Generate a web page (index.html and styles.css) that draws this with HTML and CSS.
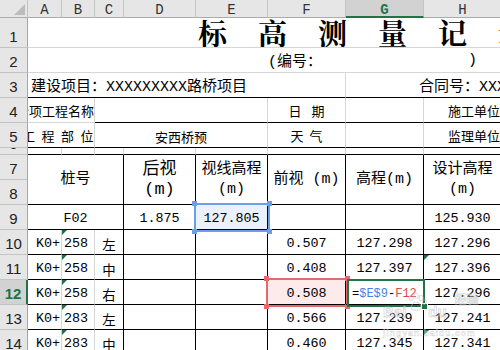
FILE: index.html
```html
<!DOCTYPE html>
<html>
<head>
<meta charset="utf-8">
<link rel="stylesheet" href="styles.css">
</head>
<body>
<div class="sheet">
  <div class="c hd corner"><i class="tri"></i></div>
  <div class="c hd">A</div><div class="c hd">B</div><div class="c hd">C</div><div class="c hd">D</div><div class="c hd">E</div><div class="c hd">F</div><div class="c hd sel">G</div><div class="c hd">H</div>

  <div class="c rh">1</div>
  <div class="c s8 title">标高测量记录</div>

  <div class="c rh">2</div>
  <div class="c s8 r2"><span>(编号：</span><span class="rp">)</span></div>

  <div class="c rh">3</div>
  <div class="c s6 bb r3">建设项目：XXXXXXXXX路桥项目</div>
  <div class="c s2 bb r3 ht">合同号：XXXXXXXXX</div>

  <div class="c rh">4</div>
  <div class="c s2 lab">分项工程名称</div>
  <div class="c s3 bb"></div>
  <div class="c bb lab2 ls10">日期</div>
  <div class="c bb"></div>
  <div class="c bb lab3">施工单位</div>

  <div class="c rh">5</div>
  <div class="c s2 bb lab"><span class="ls6">工程部位</span></div>
  <div class="c s3 bb mid">安西桥预</div>
  <div class="c bb lab2 ls6b">天气</div>
  <div class="c bb"></div>
  <div class="c bb lab3">监理单位</div>

  <div class="c rh">6</div>
  <div class="c bb"></div><div class="c bb"></div><div class="c bb"></div><div class="c bb"></div><div class="c bb"></div><div class="c bb"></div><div class="c bb"></div><div class="c bb"></div>

  <div class="c rh">7</div>
  <div class="c s3 rs2 bb br th">桩号</div>
  <div class="c rs2 bb br th big"><span>后视<br>(m)</span></div>
  <div class="c rs2 bb br th"><span>视线高程<br>(m)</span></div>
  <div class="c rs2 bb br th">前视 (m)</div>
  <div class="c rs2 bb br th">高程(m)</div>
  <div class="c rs2 bb br th"><span>设计高程<br>(m)</span></div>
  <div class="c rh">8</div>

  <div class="c rh">9</div>
  <div class="c s3 bb br d">F02</div>
  <div class="c bb br d">1.875</div>
  <div class="c bb br d selE">127.805<i class="box blue"><i class="hn tl"></i><i class="hn tr"></i><i class="hn bl"></i><i class="hn br2"></i></i></div>
  <div class="c bb br d"></div>
  <div class="c bb br d"></div>
  <div class="c bb br d">125.930</div>

  <div class="c rh">10</div>
  <div class="c bb d ka">K0+</div>
  <div class="c bb d kb tg">258</div>
  <div class="c bb br d">左</div>
  <div class="c bb br d"></div>
  <div class="c bb br d"></div>
  <div class="c bb br d">0.507</div>
  <div class="c bb br d">127.298</div>
  <div class="c bb br d">127.296</div>

  <div class="c rh">11</div>
  <div class="c bb d ka">K0+</div>
  <div class="c bb d kb tg">258</div>
  <div class="c bb br d">中</div>
  <div class="c bb br d"></div>
  <div class="c bb br d"></div>
  <div class="c bb br d">0.408</div>
  <div class="c bb br d">127.397</div>
  <div class="c bb br d tg">127.396</div>

  <div class="c rh sel">12</div>
  <div class="c bb d ka">K0+</div>
  <div class="c bb d kb tg">258</div>
  <div class="c bb br d">右</div>
  <div class="c bb br d"></div>
  <div class="c bb br d"></div>
  <div class="c bb br d selF">0.508<i class="box red"><i class="hn tl"></i><i class="hn tr"></i><i class="hn bl"></i><i class="hn br2"></i></i></div>
  <div class="c bb br d selG"><span class="fx">=<b class="fb">$E$9</b>-<b class="fr">F12</b></span><i class="box green"><i class="fill"></i></i></div>
  <div class="c bb br d">127.296</div>

  <div class="c rh">13</div>
  <div class="c bb d ka">K0+</div>
  <div class="c bb d kb tg">283</div>
  <div class="c bb br d">左</div>
  <div class="c bb br d"></div>
  <div class="c bb br d"></div>
  <div class="c bb br d">0.566</div>
  <div class="c bb br d">127.239</div>
  <div class="c bb br d">127.241</div>

  <div class="c rh">14</div>
  <div class="c bb d ka">K0+</div>
  <div class="c bb d kb tg">283</div>
  <div class="c bb br d">中</div>
  <div class="c bb br d"></div>
  <div class="c bb br d"></div>
  <div class="c bb br d">0.460</div>
  <div class="c bb br d">127.345</div>
  <div class="c bb br d tg">127.341</div>
</div>

<div class="wm">
  <div class="wm-top"><span class="wm-bai">Bai</span><svg class="paw" width="22" height="18" viewBox="0 0 26 22"><g fill="none" stroke="#bdbdbd" stroke-width="1.2" opacity="0.6"><ellipse cx="6" cy="6" rx="2.6" ry="3.4"/><ellipse cx="12" cy="3.5" rx="2.6" ry="3.2"/><ellipse cx="18" cy="6" rx="2.6" ry="3.4"/><ellipse cx="22" cy="11" rx="2.2" ry="2.8"/><path d="M6 18c0-4 3-7 6-7s6 3 6 7c0 2-2 3-6 3s-6-1-6-3z"/></g></svg><span class="wm-du">du</span><span class="wm-jy">经验</span></div>
  <div class="wm-url">jingyan.baidu.com</div>
</div>
</body>
</html>
```

FILE: styles.css
```css
html, body {
  margin: 0;
  padding: 0;
  background: #fff;
  width: 500px;
  height: 350px;
  overflow: hidden;
}

.sheet {
  display: grid;
  grid-template-columns: 28px 34px 33px 29px 72px 72px 78px 78px 78px;
  grid-template-rows: 18px 30px 25px 25px 25px 25px 7px 25px 25px 25px 25px 25px 25px 25px 25px;
  font-family: "Liberation Mono", "Noto Sans CJK SC", monospace;
  font-size: 14px;
  color: #000;
}

.c {
  box-sizing: border-box;
  border-right: 1px solid #d6d6d6;
  border-bottom: 1px solid #d6d6d6;
  display: flex;
  align-items: center;
  justify-content: center;
  overflow: hidden;
  white-space: nowrap;
  position: relative;
}

.s2 { grid-column: span 2; }
.s3 { grid-column: span 3; }
.s6 { grid-column: span 6; }
.s8 { grid-column: span 8; }
.rs2 { grid-row: span 2; }

.bb { border-bottom-color: #000; }
.br { border-right-color: #000; }

/* headers */
.hd {
  background: #e6e6e6;
  border-right-color: #c4c4c4;
  border-bottom-color: #ababab;
  font-family: "Liberation Mono", monospace;
  font-size: 14px;
  color: #333;
  padding-top: 3px;
}
.hd.sel {
  background: #d2d2d2;
  color: #217346;
  font-weight: bold;
  border-bottom: 2px solid #217346;
}
.corner .tri {
  position: absolute;
  right: 2px;
  bottom: 2px;
  width: 0;
  height: 0;
  border-left: 11px solid transparent;
  border-bottom: 11px solid #bcbcbc;
}
.rh {
  background: #e6e6e6;
  border-right-color: #a6a6a6;
  border-bottom-color: #c4c4c4;
  align-items: flex-end;
  font-family: "Liberation Sans", sans-serif;
  font-size: 15px;
  line-height: 16px;
  color: #222;
  padding-bottom: 2px;
}
.rh.sel {
  background: #d2d2d2;
  color: #217346;
  font-weight: bold;
  border-right: 2px solid #217346;
}

/* title rows */
.title {
  justify-content: flex-start;
  padding-left: 170px;
  font-family: "Noto Serif CJK SC", "Noto Sans CJK SC", serif;
  font-weight: bold;
  font-size: 29px;
  letter-spacing: 31px;
  line-height: 30px;
}
.r2 {
  justify-content: flex-start;
  padding-left: 240px;
  font-size: 15px;
}
.rp { margin-left: auto; margin-right: 24px; }
.r3 {
  justify-content: flex-start;
  padding-left: 3px;
  font-size: 15px;
}
.ht { padding-left: 73px; }

/* label rows */
.lab {
  justify-content: flex-end;
  align-items: flex-end;
  font-size: 13px;
  line-height: 16px;
  padding-bottom: 1px;
}
.lab2 {
  align-items: flex-end;
  font-size: 13px;
  line-height: 16px;
  padding-bottom: 1px;
}
.lab3 {
  justify-content: flex-end;
  align-items: flex-end;
  font-size: 13px;
  line-height: 16px;
  padding-bottom: 1px;
  padding-right: 1px;
}
.ls10 { letter-spacing: 10px; padding-left: 10px; }
.ls6 { letter-spacing: 6.5px; margin-right: -6px; flex-shrink: 0; }
.ls6b { letter-spacing: 6px; padding-left: 6px; }
.mid {
  font-size: 13px;
  padding-top: 2px;
}

/* table header */
.th {
  font-size: 15px;
  line-height: 20px;
  text-align: center;
}
.th.big { font-size: 17px; }

/* data */
.d {
  font-size: 13.4px;
  padding-top: 3px;
}
.ka { justify-content: flex-end; padding-right: 1px; }
.kb { justify-content: flex-start; padding-left: 2px; }

.tg::before {
  content: "";
  position: absolute;
  top: 0;
  left: 0;
  width: 0;
  height: 0;
  border-top: 5px solid #1e7145;
  border-right: 5px solid transparent;
}

/* selections */
.selE { background: #eaf0fc; overflow: visible; z-index: 3; }
.selF { background: #fdeaea; overflow: visible; z-index: 3; }
.selG { overflow: visible; z-index: 4; justify-content: flex-start; padding-left: 6px; }
.fx { font-size: 12px; }

.box {
  position: absolute;
  display: block;
  box-sizing: border-box;
}
.box.blue {
  left: -2px; top: -2px; right: -3px; bottom: -3px;
  border: 2px solid #6d9ce9;
}
.box.red {
  left: -2px; top: -2px; right: -3px; bottom: -3px;
  border: 2px solid #e5696b;
}
.box.green {
  left: 1px; top: -1px; right: -2px; bottom: -3px;
  border: 2px solid #217346;
}
.hn {
  position: absolute;
  display: block;
  width: 5px;
  height: 5px;
}
.blue .hn { background: #6d9ce9; }
.red .hn { background: #e5696b; }
.hn.tl { left: -4px; top: -4px; }
.hn.tr { right: -4px; top: -4px; }
.hn.bl { left: -4px; bottom: -4px; }
.hn.br2 { right: -4px; bottom: -4px; }
.fill {
  position: absolute;
  display: block;
  right: -5px;
  bottom: -5px;
  width: 5px;
  height: 5px;
  background: #217346;
  border: 1px solid #fff;
}
.fx b { font-weight: normal; }
.fb { color: #4a7fe3; }
.fr { color: #e0484b; }

/* watermark */
.wm {
  position: absolute;
  left: 383px;
  top: 290px;
  width: 117px;
  pointer-events: none;
  font-family: "Liberation Sans", sans-serif;
  z-index: 10;
}
.wm-top {
  display: flex;
  align-items: flex-end;
  height: 30px;
}
.wm-bai, .wm-du {
  font-weight: bold;
  font-size: 15px;
  color: rgba(255,255,255,0.45);
  -webkit-text-stroke: 0.8px rgba(160,160,160,0.45);
  line-height: 16px;
}
.paw { margin-bottom: 9px; }
.wm-jy {
  font-family: "Noto Sans CJK SC", sans-serif;
  font-weight: bold;
  font-size: 12px;
  line-height: 14px;
  color: rgba(255,255,255,0.4);
  -webkit-text-stroke: 0.8px rgba(160,160,160,0.4);
  margin-left: 8px;
  margin-bottom: 14px;
}
.wm-url {
  font-size: 9px;
  line-height: 10px;
  font-weight: bold;
  color: rgba(255,255,255,0.4);
  -webkit-text-stroke: 0.5px rgba(160,160,160,0.45);
  margin-top: 8px;
  letter-spacing: 0.8px;
}
```
